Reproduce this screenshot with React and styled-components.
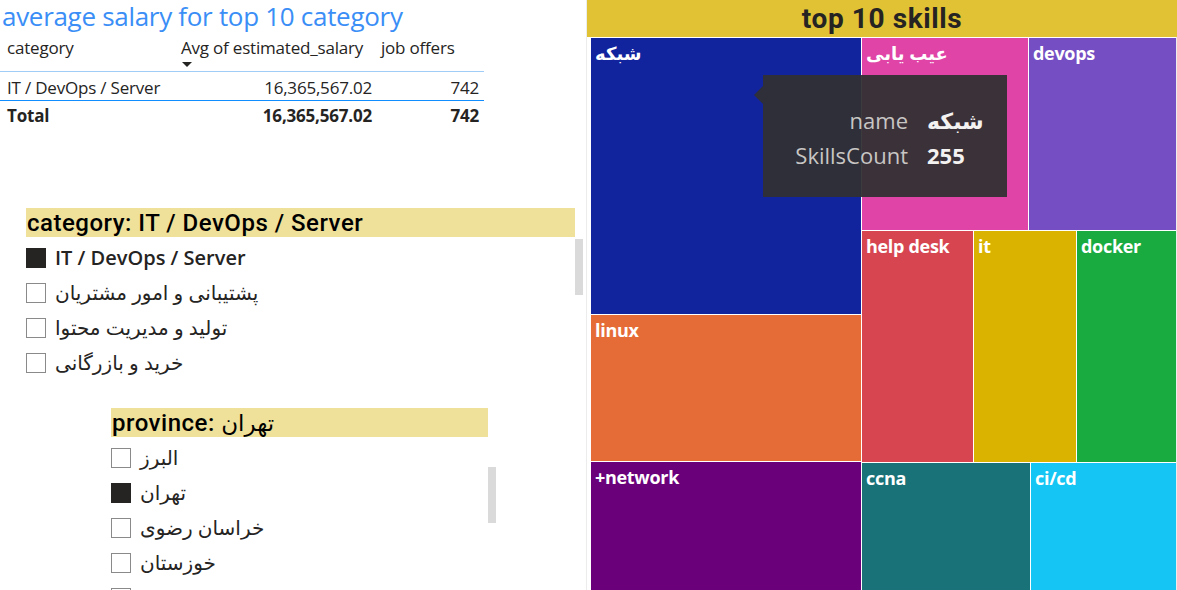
import React from "react";
import styled, { createGlobalStyle } from "styled-components";

const GlobalStyle = createGlobalStyle`
    html, body{
        margin: 0;
        padding: 0;
        background: #ffffff;
    }
    body{
        font-family: "Open Sans", "DejaVu Sans", sans-serif;
        overflow: hidden;
    }
`;

const skills = {
    left: [
        {name: "شبکه", color: "#12239e", size: 276},
        {name: "linux", color: "#e66c37", size: 146},
        {name: "+network", color: "#6b007b", size: 0},
    ],
    right: [
        {size: 192, tiles: [
            {name: "عیب یابی", color: "#e044a7", size: 166},
            {name: "devops", color: "#744ec2", size: 0},
        ]},
        {size: 231, tiles: [
            {name: "help desk", color: "#d64550", size: 111},
            {name: "it", color: "#d9b300", size: 102},
            {name: "docker", color: "#1aab40", size: 0},
        ]},
        {size: 0, tiles: [
            {name: "ccna", color: "#197278", size: 168},
            {name: "ci/cd", color: "#15c6f4", size: 0},
        ]},
    ],
};

const categories = [
    {label: "IT / DevOps / Server", checked: true},
    {label: "پشتیبانی و امور مشتریان"},
    {label: "تولید و مدیریت محتوا"},
    {label: "خرید و بازرگانی"},
];

const provinces = [
    {label: "البرز"},
    {label: "تهران", checked: true},
    {label: "خراسان رضوی"},
    {label: "خوزستان"},
    {label: "زنجان"},
];

function Slicer({title, items, offset, width, gap, bold, scrollTop}){
    return <SlicerBox offset={offset} width={width} gap={gap}>
        <SlicerHeader>{title}</SlicerHeader>
        <SlicerList>
            {items.map((item, i) =>
                <SlicerItem key={i} bold={bold && item.checked}>
                    <CheckBox checked={item.checked} />
                    <span dir="auto">{item.label}</span>
                </SlicerItem>
            )}
            <ScrollThumb top={scrollTop} />
        </SlicerList>
    </SlicerBox>;
}

function Tile({tile, vertical}){
    return <TileBox color={tile.color} size={tile.size} vertical={vertical}>
        <TileLabel dir="auto">{tile.name}</TileLabel>
    </TileBox>;
}

export default function App(){
    return <Page>
        <GlobalStyle />
        <LeftPanel>
            <Title>average salary for top 10 category</Title>
            <Table>
                <HeadCell>category</HeadCell>
                <HeadCell>
                    Avg of estimated_salary
                    <SortArrow />
                </HeadCell>
                <HeadCell>job offers</HeadCell>
                <BodyCell>IT / DevOps / Server</BodyCell>
                <BodyCell align="right">16,365,567.02</BodyCell>
                <BodyCell align="right">742</BodyCell>
                <TotalCell>Total</TotalCell>
                <TotalCell align="right">16,365,567.02</TotalCell>
                <TotalCell align="right">742</TotalCell>
            </Table>
            <Slicer
                title="category: IT / DevOps / Server"
                items={categories}
                offset={26}
                width={549}
                gap={79}
                bold
                scrollTop={2}
            />
            <Slicer
                title={<>province: <PersianTitle dir="rtl">تهران</PersianTitle></>}
                items={provinces}
                offset={111}
                width={377}
                gap={28}
                scrollTop={30}
            />
        </LeftPanel>
        <Divider />
        <RightPanel>
            <ChartHeader>top 10 skills</ChartHeader>
            <Treemap>
                <TreeColumn width={270}>
                    {skills.left.map((tile, i) => <Tile key={i} tile={tile} vertical />)}
                </TreeColumn>
                <TreeColumn>
                    {skills.right.map((row, i) =>
                        <TreeRow key={i} size={row.size}>
                            {row.tiles.map((tile, j) => <Tile key={j} tile={tile} />)}
                        </TreeRow>
                    )}
                </TreeColumn>
                <Tooltip>
                    <TipLabel>name</TipLabel>
                    <TipValue dir="auto">شبکه</TipValue>
                    <TipLabel>SkillsCount</TipLabel>
                    <TipValue>255</TipValue>
                </Tooltip>
            </Treemap>
        </RightPanel>
    </Page>;
}

const Page = styled.div`
    width: 1177px;
    height: 590px;
    display: grid;
    grid-template-columns: 586px 1px 590px;
    overflow: hidden;
`;

const LeftPanel = styled.div`
    display: flex;
    flex-direction: column;
    overflow: hidden;
`;

const Title = styled.div`
    color: #3a8ef6;
    font-size: 26px;
    line-height: 34px;
    margin-top: -1px;
    padding-left: 2px;
    letter-spacing: -0.3px;
    white-space: nowrap;
`;

const Table = styled.div`
    width: 484px;
    display: grid;
    grid-template-columns: 177px 200px 107px;
    font-size: 17px;
    color: #252423;
`;

const HeadCell = styled.div`
    position: relative;
    height: 39px;
    padding: 3px 0 0 4px;
    box-sizing: border-box;
    white-space: nowrap;
    letter-spacing: -0.2px;
    border-bottom: 1px solid #9fcdf8;
    &:first-child{
        padding-left: 7px;
    }
`;

const SortArrow = styled.div`
    position: absolute;
    left: 5px;
    top: 29px;
    width: 0;
    height: 0;
    border-left: 5px solid transparent;
    border-right: 5px solid transparent;
    border-top: 5px solid #252423;
`;

const BodyCell = styled.div`
    height: 28px;
    line-height: 31px;
    text-align: ${p => p.align || "left"};
    padding: 0 ${p => p.align ? "5px" : "0"} 0 ${p => p.align ? "0" : "7px"};
    border-bottom: 1px solid #118dff;
    white-space: nowrap;
    letter-spacing: -0.2px;
`;

const TotalCell = styled.div`
    height: 28px;
    line-height: 30px;
    font-weight: 700;
    text-align: ${p => p.align || "left"};
    padding: 0 ${p => p.align ? "5px" : "0"} 0 ${p => p.align ? "0" : "7px"};
    white-space: nowrap;
    letter-spacing: -0.2px;
`;

const SlicerBox = styled.div`
    margin-top: ${p => p.gap}px;
    margin-left: ${p => p.offset}px;
    width: ${p => p.width}px;
`;

const SlicerHeader = styled.div`
    background: #f0e19a;
    height: 29px;
    line-height: 31px;
    padding-left: 1px;
    font-family: Roboto, "DejaVu Sans", sans-serif;
    font-weight: 500;
    font-size: 24px;
    color: #000000;
    letter-spacing: 0.5px;
    white-space: nowrap;
    overflow: hidden;
`;

const PersianTitle = styled.span`
    font-family: "DejaVu Sans", sans-serif;
    font-weight: 400;
    font-size: 23px;
    letter-spacing: 0;
`;

const SlicerList = styled.div`
    position: relative;
    padding-top: 3px;
`;

const SlicerItem = styled.div`
    height: 35px;
    display: flex;
    align-items: center;
    gap: 9px;
    font-size: 20px;
    font-weight: ${p => p.bold ? 600 : 400};
    color: #252423;
    white-space: nowrap;
`;

const CheckBox = styled.div`
    width: 20px;
    height: 20px;
    box-sizing: border-box;
    border: 1px solid #8a8a8a;
    background: ${p => p.checked ? "#252423" : "#ffffff"};
    border-color: ${p => p.checked ? "#252423" : "#8a8a8a"};
    flex-shrink: 0;
`;

const ScrollThumb = styled.div`
    position: absolute;
    right: -8px;
    top: ${p => p.top}px;
    width: 8px;
    height: 56px;
    background: #dadada;
`;

const Divider = styled.div`
    background: #ececec;
`;

const RightPanel = styled.div`
    display: flex;
    flex-direction: column;
    overflow: hidden;
`;

const ChartHeader = styled.div`
    height: 37px;
    flex-shrink: 0;
    background: #e0c234;
    text-align: center;
    font-family: Roboto, "DejaVu Sans", sans-serif;
    font-weight: 700;
    font-size: 28px;
    line-height: 37px;
    letter-spacing: 0.6px;
    color: #252423;
`;

const Treemap = styled.div`
    position: relative;
    flex: 1;
    display: flex;
    gap: 1px;
    padding: 1px 1px 0 4px;
    background: #ffffff;
    box-shadow: inset -1px 0 0 #ececec;
`;

const TreeColumn = styled.div`
    display: flex;
    flex-direction: column;
    gap: 1px;
    ${p => p.width ? `width: ${p.width}px; flex-shrink: 0;` : "flex: 1;"}
`;

const TreeRow = styled.div`
    display: flex;
    gap: 1px;
    ${p => p.size ? `height: ${p.size}px; flex-shrink: 0;` : "flex: 1;"}
`;

const TileBox = styled.div`
    background: ${p => p.color};
    ${p => p.size
        ? `${p.vertical ? "height" : "width"}: ${p.size}px; flex-shrink: 0;`
        : "flex: 1;"}
    padding: 5px 4px;
    box-sizing: border-box;
    overflow: hidden;
`;

const TileLabel = styled.div`
    color: #ffffff;
    font-weight: 700;
    font-size: 18px;
    line-height: 20px;
    letter-spacing: -0.3px;
    text-align: left;
    white-space: nowrap;
`;

const Tooltip = styled.div`
    position: absolute;
    left: 176px;
    top: 38px;
    width: 244px;
    height: 122px;
    box-sizing: border-box;
    padding: 29px 0 0 0;
    background: rgba(48, 48, 50, 0.94);
    display: grid;
    grid-template-columns: 145px auto;
    column-gap: 19px;
    row-gap: 2px;
    align-content: start;
    font-size: 22px;
    line-height: 33px;
    &::before{
        content: "";
        position: absolute;
        left: -9px;
        top: 11px;
        border-top: 9px solid transparent;
        border-bottom: 9px solid transparent;
        border-right: 9px solid rgba(48, 48, 50, 0.94);
    }
`;

const TipLabel = styled.div`
    text-align: right;
    color: #c8c6c4;
    white-space: nowrap;
`;

const TipValue = styled.div`
    color: #f3f2f1;
    font-weight: 700;
    text-align: left;
`;
